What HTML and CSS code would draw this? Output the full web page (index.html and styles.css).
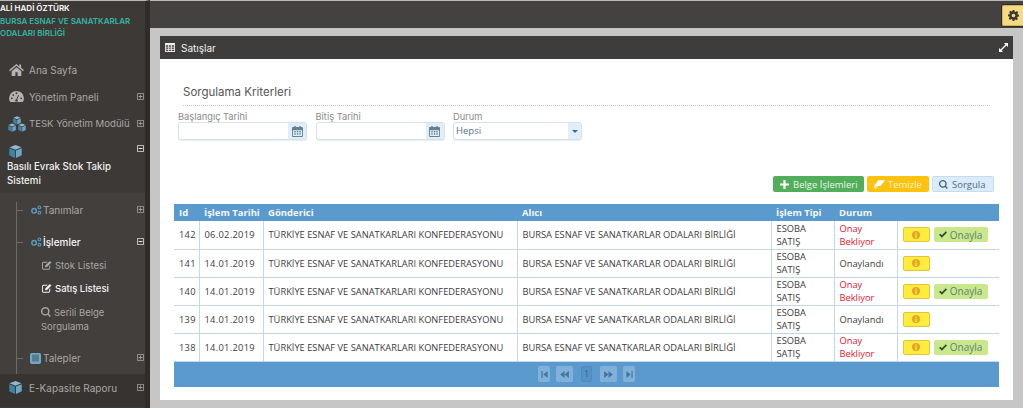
FILE: index.html
```html
<!DOCTYPE html>
<html lang="tr">
<head>
<meta charset="utf-8">
<title>Satışlar</title>
<link rel="stylesheet" href="styles.css">
</head>
<body>
<svg class="sprites" width="0" height="0" aria-hidden="true">
  <symbol id="i-home" viewBox="0 0 16 14"><path d="M8 1 0 7.600l1 1.200L8 3l7 5.800 1-1.200-3-2.500V1.500h-2v2.200zM2.800 9v5h4V10h2.400v4h4V9L8 4.500z"/></symbol>
  <symbol id="i-gauge" viewBox="0 0 16 14"><path d="M8 1a8 8 0 0 0-8 8c0 1.600.4 3 1.200 4h13.600A8 8 0 0 0 16 9a8 8 0 0 0-8-8zM3 10a1 1 0 1 1 0-2 1 1 0 0 1 0 2zm1.500-3.500a1 1 0 1 1 0-2 1 1 0 0 1 0 2zM8 4.500a1 1 0 1 1 0-2 1 1 0 0 1 0 2zm1.500 7a1.700 1.700 0 0 1-3 0c0-.8.600-1.400 1.300-1.600l2-4.400.9.400-2 4.400c.5.300.8.900.8 1.200zM13 10a1 1 0 1 1 0-2 1 1 0 0 1 0 2z"/></symbol>
  <symbol id="i-cube" viewBox="0 0 14 14"><path fill="#8fb8cf" d="M7 0 .6 2.500 7 5l6.400-2.500z"/><path fill="#3f82a8" d="M.3 3.400V11L6.500 14V6z"/><path fill="#6fa6c4" d="M7.500 6v8l6.200-3V3.400z"/></symbol>
  <symbol id="i-cubes" viewBox="0 0 20 17"><g id="cb"><path fill="#8fb8cf" d="M10 0 6 1.600 10 3.200l4-1.600z"/><path fill="#3f82a8" d="M5.800 2.100v5L9.700 9V4z"/><path fill="#6fa6c4" d="M10.300 4v5l3.900-1.900v-5z"/></g><use href="#cb" x="-5.500" y="8"/><use href="#cb" x="5.500" y="8"/></symbol>
  <symbol id="i-gears" viewBox="0 0 16 13"><g fill="none" stroke="#5b9ac0" stroke-width="2"><circle cx="5.500" cy="7.500" r="3"/><circle cx="12.500" cy="3" r="1.800" stroke-width="1.500"/><circle cx="12.500" cy="10" r="1.800" stroke-width="1.500"/></g></symbol>
  <symbol id="i-edit" viewBox="0 0 14 13"><path d="M1.800 2H8L6.700 3.300H2a.7.7 0 0 0-.7.7v7c0 .4.300.7.700.7h7.500c.4 0 .7-.3.700-.7V8l1.300-1.300V11a2 2 0 0 1-2 2H2a2 2 0 0 1-2-2V4a2 2 0 0 1 1.800-2z"/><path d="M11 .8 13.200 3 7 9.200l-2.800.6.600-2.800z"/></symbol>
  <symbol id="i-search" viewBox="0 0 14 14"><path d="M6 0a6 6 0 0 1 4.800 9.500l3 3-1.500 1.500-3-3A6 6 0 1 1 6 0zm0 2a4 4 0 1 0 0 8 4 4 0 0 0 0-8z"/></symbol>
  <symbol id="i-plus" viewBox="0 0 10 10"><path d="M3.800 0h2.400v3.800H10v2.400H6.200V10H3.800V6.200H0V3.800h3.800z"/></symbol>
  <symbol id="i-minus" viewBox="0 0 9 9"><path fill-rule="evenodd" d="M1.500 0h6A1.500 1.500 0 0 1 9 1.500v6A1.500 1.500 0 0 1 7.500 9h-6A1.500 1.500 0 0 1 0 7.500v-6A1.500 1.500 0 0 1 1.500 0zm0 1a.5.5 0 0 0-.5.500v6c0 .3.200.5.500.5h6c.3 0 .5-.2.500-.5v-6a.5.500 0 0 0-.5-.5zM2 3.700h5v1.600H2z"/></symbol>
  <symbol id="i-expand" viewBox="0 0 9 9"><path fill-rule="evenodd" d="M1.500 0h6A1.500 1.500 0 0 1 9 1.500v6A1.500 1.500 0 0 1 7.500 9h-6A1.500 1.500 0 0 1 0 7.500v-6A1.500 1.500 0 0 1 1.500 0zm0 1a.5.5 0 0 0-.5.500v6c0 .3.200.5.500.5h6c.3 0 .5-.2.500-.5v-6a.5.500 0 0 0-.5-.5zM4 2h1v2h2v1H5v2H4V5H2V4h2z"/></symbol>
  <symbol id="i-cal" viewBox="0 0 12 12"><path fill-rule="evenodd" d="M2.500 0h1.500v1.200h4V0h1.500v1.200H11c.6 0 1 .4 1 1V11c0 .6-.4 1-1 1H1c-.6 0-1-.4-1-1V2.200c0-.6.4-1 1-1h1.500zM1 4.500V11h10V4.500zM2.500 5.500h1.500V7H2.500zm2.800 0h1.500V7H5.300zm2.700 0h1.500V7H8zM2.500 8h1.500v1.500H2.500zm2.800 0h1.500v1.500H5.300zM8 8h1.500v1.500H8z"/></symbol>
  <symbol id="i-check" viewBox="0 0 12 10"><path d="M4.300 9.800 0 5.500l1.800-1.800 2.500 2.500L10.200.2 12 2z"/></symbol>
  <symbol id="i-info" viewBox="0 0 10 10"><path fill-rule="evenodd" d="M5 0a5 5 0 1 1 0 10A5 5 0 0 1 5 0zM4.200 1.800v1.500h1.600V1.800zm-.4 2.500v1h.5v2h-.5v1h2.400v-1h-.5v-3z"/></symbol>
  <symbol id="i-eraser" viewBox="0 0 14 11"><path d="M5.500 0H14L8.500 7.500H0z"/><path d="M0 7.500h5L3 11H1.500L0 9.500z" opacity=".7"/></symbol>
  <symbol id="i-table" viewBox="0 0 11 10"><path fill-rule="evenodd" d="M0 0h11v10H0zm1 2.500v1.600h2.500V2.500zm3.500 0v1.600h2V2.500zm3 0v1.600H10V2.500zM1 5v1.500h2.500V5zm3.500 0v1.500h2V5zm3 0v1.500H10V5zM1 7.400V9h2.500V7.400zm3.500 0V9h2V7.400zm3 0V9H10V7.400z"/></symbol>
  <symbol id="i-resize" viewBox="0 0 10 10"><path d="M5.500 0H10v4.500L8.300 2.800 2.800 8.300 4.500 10H0V5.500l1.700 1.700 5.500-5.500z"/></symbol>
  <symbol id="i-cog" viewBox="0 0 12 12"><path fill-rule="evenodd" d="M5 0h2l.3 1.600 1.100.5L9.800 1.200l1.400 1.400-.9 1.400.5 1.100L12 5v2l-1.600.3-.5 1.100.9 1.400-1.400 1.400-1.400-.9-1.100.5L7 12H5l-.3-1.600-1.100-.5-1.400.9-1.400-1.400.9-1.400-.5-1.100L0 7V5l1.600-.3.5-1.100-.9-1.400 1.400-1.400 1.400.9 1.100-.5zM6 4a2 2 0 1 0 0 4 2 2 0 0 0 0-4z"/></symbol>
  <symbol id="i-tv" viewBox="0 0 13 13"><path fill-opacity=".55" d="M2 2h9v9H2z"/><path fill-rule="evenodd" d="M2 0h9a2 2 0 0 1 2 2v9a2 2 0 0 1-2 2H2a2 2 0 0 1-2-2V2a2 2 0 0 1 2-2zm.5 2v8h8V2z"/></symbol>
  <symbol id="i-first" viewBox="0 0 8 9"><path d="M0 0h1.500v9H0zM8 0v9L2.500 4.500z"/></symbol>
  <symbol id="i-prev" viewBox="0 0 10 8"><path d="M5 0v8L0 4zM10 0v8L5 4z"/></symbol>
  <symbol id="i-next" viewBox="0 0 10 8"><path d="M0 0v8l5-4zM5 0v8l5-4z"/></symbol>
  <symbol id="i-last" viewBox="0 0 8 9"><path d="M8 0H6.500v9H8zM0 0v9l5.500-4.500z"/></symbol>
</svg>

<div class="app">
  <aside class="sidebar">
    <div class="user">
      <div class="user-name">ALİ HADİ ÖZTÜRK</div>
      <div class="user-org">BURSA ESNAF VE SANATKARLAR ODALARI BİRLİĞİ</div>
    </div>
    <nav class="menu">
      <a class="item"><svg class="ico ico-home"><use href="#i-home"/></svg><span>Ana Sayfa</span></a>
      <a class="item"><svg class="ico ico-home"><use href="#i-gauge"/></svg><span>Yönetim Paneli</span><svg class="tog"><use href="#i-expand"/></svg></a>
      <a class="item"><svg class="ico ico-big"><use href="#i-cubes"/></svg><span class="tight">TESK Yönetim Modülü</span><svg class="tog"><use href="#i-expand"/></svg></a>
      <div class="item-open">
        <div class="open-top"><svg class="ico-cube"><use href="#i-cube"/></svg><svg class="tog tog-on"><use href="#i-minus"/></svg></div>
        <div class="open-title">Basılı Evrak Stok Takip Sistemi</div>
      </div>
      <div class="sub">
        <div class="tree">
          <a class="sub-item tanim"><svg class="ico-gears"><use href="#i-gears"/></svg><span>Tanımlar</span><svg class="tog"><use href="#i-expand"/></svg></a>
          <a class="sub-item on islem"><svg class="ico-gears"><use href="#i-gears"/></svg><span>İşlemler</span><svg class="tog tog-on"><use href="#i-minus"/></svg></a>
          <a class="leaf"><svg class="ico-leaf"><use href="#i-edit"/></svg>Stok Listesi</a>
          <a class="leaf leaf-on"><svg class="ico-leaf"><use href="#i-edit"/></svg>Satış Listesi<i class="pointer"></i></a>
          <a class="leaf leaf-wrap"><svg class="ico-leaf"><use href="#i-search"/></svg>Serili Belge Sorgulama</a>
          <a class="sub-item talep"><svg class="ico-tv"><use href="#i-tv"/></svg><span>Talepler</span><svg class="tog"><use href="#i-expand"/></svg></a>
        </div>
      </div>
      <a class="item last"><svg class="ico-cube2"><use href="#i-cube"/></svg><span>E-Kapasite Raporu</span><svg class="tog"><use href="#i-expand"/></svg></a>
    </nav>
  </aside>

  <div class="main">
    <header class="topbar"><button class="cfg"><svg class="cfg-ico"><use href="#i-cog"/></svg></button></header>
    <section class="panel">
      <div class="panel-head">
        <svg class="ph-ico"><use href="#i-table"/></svg><span class="ph-title">Satışlar</span>
        <svg class="ph-resize"><use href="#i-resize"/></svg>
      </div>
      <div class="panel-body">
        <div class="criteria">Sorgulama Kriterleri</div>
        <div class="filters">
          <label class="field"><span class="field-label">Başlangıç Tarihi</span>
            <span class="input"><span class="input-text"></span><span class="addon"><svg class="cal"><use href="#i-cal"/></svg></span></span></label>
          <label class="field"><span class="field-label">Bitiş Tarihi</span>
            <span class="input"><span class="input-text"></span><span class="addon"><svg class="cal"><use href="#i-cal"/></svg></span></span></label>
          <label class="field"><span class="field-label">Durum</span>
            <span class="input"><span class="input-text">Hepsi</span><span class="addon addon-sel"><i class="caret"></i></span></span></label>
        </div>
        <div class="actions">
          <button class="btn btn-green"><svg class="b-ico"><use href="#i-plus"/></svg>Belge İşlemleri</button>
          <button class="btn btn-yellow"><svg class="b-ico b-wide"><use href="#i-eraser"/></svg>Temizle</button>
          <button class="btn btn-blue"><svg class="b-ico"><use href="#i-search"/></svg>Sorgula</button>
        </div>
        <table class="grid">
          <colgroup><col class="c1"><col class="c2"><col class="c3"><col class="c4"><col class="c5"><col class="c6"><col></colgroup>
          <thead><tr><th>Id</th><th>İşlem Tarihi</th><th>Gönderici</th><th>Alıcı</th><th>İşlem Tipi</th><th>Durum</th><th></th></tr></thead>
          <tbody>
            <tr><td class="num">142</td><td class="num">06.02.2019</td><td>TÜRKİYE ESNAF VE SANATKARLARI KONFEDERASYONU</td><td>BURSA ESNAF VE SANATKARLAR ODALARI BİRLİĞİ</td><td>ESOBA SATIŞ</td><td class="wait">Onay Bekliyor</td><td><span class="row-acts"><button class="mini"><svg class="m-ico"><use href="#i-info"/></svg></button><button class="ok"><svg class="ok-ico"><use href="#i-check"/></svg>Onayla</button></span></td></tr>
            <tr><td class="num">141</td><td class="num">14.01.2019</td><td>TÜRKİYE ESNAF VE SANATKARLARI KONFEDERASYONU</td><td>BURSA ESNAF VE SANATKARLAR ODALARI BİRLİĞİ</td><td>ESOBA SATIŞ</td><td>Onaylandı</td><td><span class="row-acts"><button class="mini"><svg class="m-ico"><use href="#i-info"/></svg></button></span></td></tr>
            <tr><td class="num">140</td><td class="num">14.01.2019</td><td>TÜRKİYE ESNAF VE SANATKARLARI KONFEDERASYONU</td><td>BURSA ESNAF VE SANATKARLAR ODALARI BİRLİĞİ</td><td>ESOBA SATIŞ</td><td class="wait">Onay Bekliyor</td><td><span class="row-acts"><button class="mini"><svg class="m-ico"><use href="#i-info"/></svg></button><button class="ok"><svg class="ok-ico"><use href="#i-check"/></svg>Onayla</button></span></td></tr>
            <tr><td class="num">139</td><td class="num">14.01.2019</td><td>TÜRKİYE ESNAF VE SANATKARLARI KONFEDERASYONU</td><td>BURSA ESNAF VE SANATKARLAR ODALARI BİRLİĞİ</td><td>ESOBA SATIŞ</td><td>Onaylandı</td><td><span class="row-acts"><button class="mini"><svg class="m-ico"><use href="#i-info"/></svg></button></span></td></tr>
            <tr><td class="num">138</td><td class="num">14.01.2019</td><td>TÜRKİYE ESNAF VE SANATKARLARI KONFEDERASYONU</td><td>BURSA ESNAF VE SANATKARLAR ODALARI BİRLİĞİ</td><td>ESOBA SATIŞ</td><td class="wait">Onay Bekliyor</td><td><span class="row-acts"><button class="mini"><svg class="m-ico"><use href="#i-info"/></svg></button><button class="ok"><svg class="ok-ico"><use href="#i-check"/></svg>Onayla</button></span></td></tr>
          </tbody>
        </table>
        <div class="pager">
          <span class="pg pg-n"><svg class="pg-i"><use href="#i-first"/></svg></span>
          <span class="pg pg-w"><svg class="pg-i"><use href="#i-prev"/></svg></span>
          <span class="pg-cur">1</span>
          <span class="pg pg-w"><svg class="pg-i"><use href="#i-next"/></svg></span>
          <span class="pg pg-n"><svg class="pg-i"><use href="#i-last"/></svg></span>
        </div>
      </div>
    </section>
  </div>
</div>
</body>
</html>
```
FILE: styles.css
```css
* { box-sizing: border-box; }
html, body { margin: 0; height: 100%; }
body { overflow: hidden; font-family: "Inter", "Liberation Sans", sans-serif; background: #c6c6c6; }
.sprites { position: absolute; }

.app { display: flex; height: 408px; }

/* left navigation */
.sidebar { width: 150px; flex: none; background: #3d3937; border-right: 5px solid #2f2c2a; border-top: 1px solid #bdb9b6; color: #aaa7a4; overflow: hidden; }
.user { height: 50px; padding-top: 1px; font-size: 8px; line-height: 12.500px; font-weight: 600; }
.user-name { color: #fff; }
.user-org { color: #36b5a0; width: 132px; }
.menu { display: flex; flex-direction: column; }
.item { display: flex; align-items: center; height: 27px; padding-left: 9px; font-size: 10px; position: relative; }
.menu > .item:first-child { margin-top: 5px; }
.ico { fill: #b5b2af; flex: none; }
.ico-home { width: 15px; height: 13px; margin-right: 5px; }
.ico-big { width: 18px; height: 16px; margin-left: -1px; margin-right: 3px; }
.item span { white-space: nowrap; }
.tight { font-size: 9.600px; }
.tog { position: absolute; right: 1px; width: 7px; height: 7px; fill: #a5a2a0; }
.tog-on { fill: #e4e2e0; }
.item-open { position: relative; height: 56px; padding-top: 5px; }
.open-top { display: flex; height: 18px; padding-left: 9px; align-items: center; position: relative; }
.ico-cube { width: 13px; height: 13px; }
.open-top .tog { top: 3px; }
.open-title { padding-left: 7px; color: #f2f1f0; font-size: 9.700px; line-height: 14px; font-weight: 500; width: 130px; }
.sub { background: #423f3d; height: 181px; padding-left: 16px; }
.tree { height: 181px; border-left: 1px solid #6d6a68; position: relative; }
.sub-item { display: flex; align-items: center; height: 16px; font-size: 10px; position: relative; padding-left: 13px; }
.sub-item::before { content: ""; position: absolute; left: 0; top: 8px; width: 6px; height: 1px; background: #6d6a68; }
.tanim { margin-top: 9px; }
.islem { margin-top: 16px; }
.talep { margin-top: 16px; }
.sub-item .tog { right: 1px; top: 4px; }
.ico-gears { width: 12px; height: 10px; margin-right: 1px; flex: none; }
.ico-tv { width: 11px; height: 11px; margin-right: 2px; fill: #6fa9c9; flex: none; }
.on { color: #f5f4f3; font-weight: 500; }
.leaf { display: block; font-size: 9.500px; line-height: 14px; padding: 0 2px 0 25px; position: relative; }
.islem + .leaf { margin-top: 9px; }
.leaf + .leaf { margin-top: 9px; }
.leaf-on { color: #f5f4f3; font-weight: 500; }
.leaf + .leaf-wrap { margin-top: 10px; padding-left: 24px; }
.ico-leaf { width: 10px; height: 10px; fill: currentColor; margin-right: 3px; vertical-align: -1px; }
.pointer { position: absolute; right: -6px; top: 2px; border: 5px solid transparent; border-right-color: #f2f2f2; border-left: 0; }
.last { height: 33px; background: #373331; padding: 0 0 6px 9px; }
.last .tog { top: 10px; }
.ico-cube2 { width: 13px; height: 13px; margin-right: 7px; flex: none; }

/* top strip and content panel */
.main { flex: 1; min-width: 0; }
.topbar { height: 28px; background: #444140; border-top: 1px solid #bdb9b6; display: flex; justify-content: flex-end; align-items: flex-start; padding-top: 4px; }
.cfg { width: 21px; height: 21px; padding: 0; border: 1px solid #d8b24e; border-right: 0; border-radius: 2px 0 0 2px; background: #f4da82; display: flex; align-items: center; justify-content: center; box-shadow: 0 0 0 1px #2f2c2a; }
.cfg-ico { width: 11px; height: 11px; fill: #3d3a36; }
.panel { margin: 8px 10px; height: 364px; display: flex; flex-direction: column; }
.panel-head { height: 23px; background: #3e3d3c; display: flex; align-items: center; padding: 0 5px; color: #f0f0f0; flex: none; }
.ph-ico { width: 10px; height: 9px; fill: #eee; margin-right: 6px; }
.ph-title { font-size: 10px; flex: 1; }
.ph-resize { width: 9px; height: 9px; fill: #fff; }
.panel-body { background: #fff; flex: 1; padding: 0 14px; }
.criteria { margin: 21px 9px 0; height: 26px; padding-top: 5px; font-size: 11.500px; color: #555; border-bottom: 1px dotted #c5c5c5; }
.filters { display: flex; gap: 8.500px; margin: 5px 0 0 4px; }
.field { display: flex; flex-direction: column; width: 129px; }
.field-label { font-size: 9.300px; line-height: 11px; color: #8b8b8b; }
.input { display: flex; height: 18px; border: 1px solid #d5e1ec; border-radius: 3px; background: #fff; overflow: hidden; box-shadow: 0 1px 1px #e6edf3; }
.input-text { flex: 1; font: 9.500px/16px "Open Sans", sans-serif; color: #5a7286; padding-left: 2px; }
.addon { width: 18px; background: #dfeefa; display: flex; align-items: center; justify-content: center; }
.addon-sel { width: 13px; }
.cal { width: 11px; height: 11px; fill: #67808f; }
.caret { border: 3px solid transparent; border-top: 3px solid #3d6f95; border-bottom: 0; }
.actions { display: flex; justify-content: flex-end; gap: 3px; margin: 36px 5px 0 0; height: 16px; }
.btn { height: 16px; padding: 0 6px; border: 1px solid transparent; border-radius: 2px; display: inline-flex; align-items: center; font: 9.500px "Open Sans", sans-serif; white-space: nowrap; }
.btn-green { background: #53ae5c; color: #e8f6e9; width: 91px; }
.btn-yellow { background: #fdc210; color: #fff3c4; width: 62px; }
.btn-blue { background: #dcebf9; border-color: #c8dcef; color: #4e6c85; width: 62px; }
.b-ico { width: 9px; height: 9px; margin-right: 4px; fill: currentColor; flex: none; }
.btn-green .b-ico { fill: #fff; }
.btn-yellow .b-ico { fill: #fff; }
.btn-blue .b-ico { fill: #3f5f7a; }
.btn-yellow .b-wide { width: 11px; height: 9px; margin-right: 3px; }

/* data grid */
.grid { width: 825px; margin-top: 12px; border-collapse: collapse; table-layout: fixed; font: 9.300px/13px "Open Sans", sans-serif; color: #3c3c3c; }
.c1 { width: 25px; } .c2 { width: 64px; } .c3 { width: 254px; } .c4 { width: 254px; } .c5 { width: 63px; } .c6 { width: 63px; }
.grid th { height: 17px; padding: 0 5px; background: #5a9ace; color: #f2f8fc; text-align: left; font-weight: 700; font-size: 9.500px; line-height: 12px; white-space: nowrap; }
.grid td { height: 28px; padding: 0 5px; border: 1px solid #c3d9ea; border-top: 0; vertical-align: middle; }
.grid td:first-child { border-left: 0; }
.grid td:last-child { border-right: 0; }
.num { white-space: nowrap; letter-spacing: .3px; }
.wait { color: #e2162e; }
.row-acts { display: flex; gap: 4px; align-items: center; }
.mini { width: 27px; height: 15px; padding: 0; border: 1px solid #e4c23e; border-radius: 2px; background: #ffed3d; display: flex; align-items: center; justify-content: center; }
.m-ico { width: 8px; height: 8px; fill: #e4a52c; }
.ok { width: 54px; height: 15px; padding: 0; border: 0; border-radius: 2px; background: #c9e88c; color: #5f8070; font: 10px "Open Sans", sans-serif; display: flex; align-items: center; justify-content: center; }
.ok-ico { width: 8px; height: 7px; fill: #2f4a36; margin-right: 3px; }
.pager { width: 825px; height: 25px; background: #5a9ace; display: flex; justify-content: center; align-items: center; gap: 6px; }
.pg { height: 16px; background: #82b1d8; border-radius: 2px; display: flex; align-items: center; justify-content: center; }
.pg-n { width: 12px; }
.pg-w { width: 17px; }
.pg-i { width: 7px; height: 7px; fill: #3f76a3; }
.pg-w .pg-i { width: 9px; }
.pg-cur { width: 11px; height: 16px; text-align: center; font: 9px/14px "Open Sans", sans-serif; color: #32618a; background: #5592c6; border: 1px solid #4f8aba; border-radius: 2px; margin: 0 2px; }
```
